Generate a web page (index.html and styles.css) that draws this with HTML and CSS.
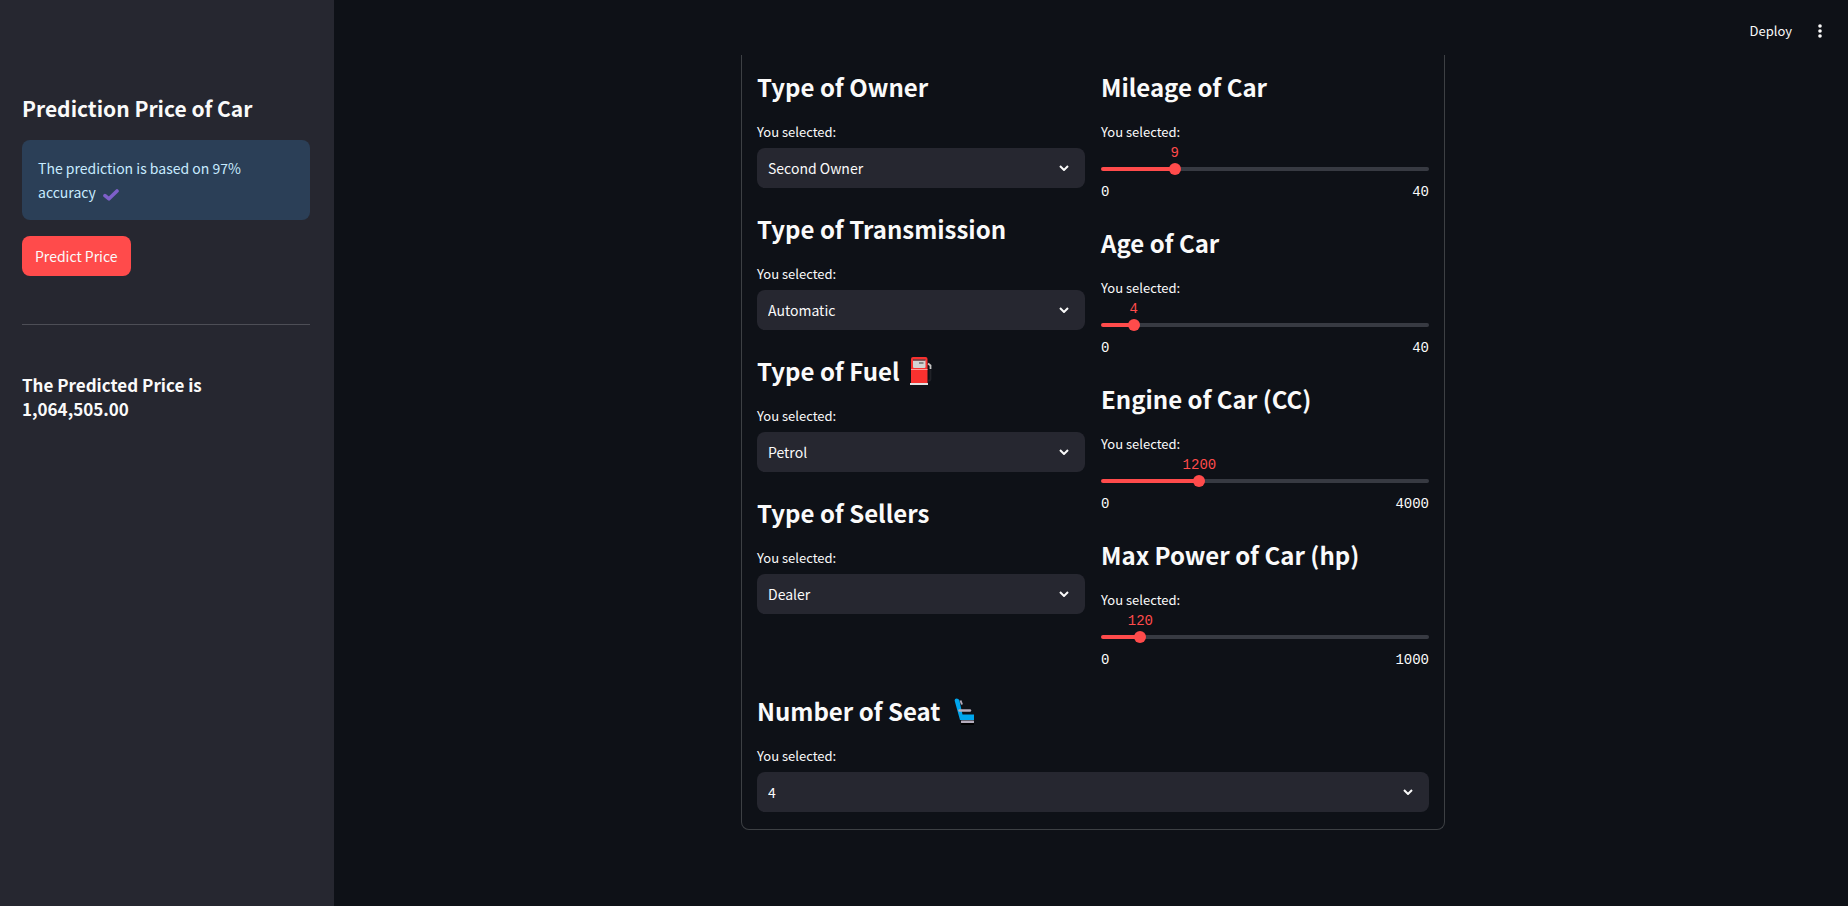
FILE: index.html
```html
<!DOCTYPE html>
<html lang="en">
<head>
<meta charset="utf-8">
<title>Prediction Price of Car</title>
<link rel="stylesheet" href="styles.css">
</head>
<body>
<div class="app">
  <aside class="sidebar">
    <h2 class="sidebar-title">Prediction Price of Car</h2>
    <div class="alert">The prediction is based on 97% accuracy
      <svg class="check" viewBox="0 0 16 12" aria-hidden="true"><path d="M2 6.6l4 3.2L14 2" fill="none" stroke="#7e5fc9" stroke-width="3.6" stroke-linecap="round" stroke-linejoin="round"/></svg>
    </div>
    <button class="predict" type="button">Predict Price</button>
    <hr class="divider">
    <h3 class="result">The Predicted Price is 1,064,505.00</h3>
  </aside>
  <div class="page">
    <header class="topbar">
      <button class="deploy" type="button">Deploy</button>
      <button class="menu" type="button" aria-label="Main menu">
        <svg class="dots" viewBox="0 0 4 14" aria-hidden="true"><g fill="#fafafa"><circle cx="2" cy="2" r="1.8"/><circle cx="2" cy="7" r="1.8"/><circle cx="2" cy="12" r="1.8"/></g></svg>
      </button>
    </header>
    <main class="content">
      <form class="card">
        <div class="columns">
          <div class="column">
            <section class="field">
              <h2 class="heading">Type of Owner</h2>
              <label class="label" for="owner">You selected:</label>
              <div class="select-box"><select class="select" id="owner"><option>Second Owner</option></select><svg class="chevron" viewBox="0 0 10 6" aria-hidden="true"><path d="M1 1l4 4 4-4"/></svg></div>
            </section>
            <section class="field">
              <h2 class="heading">Type of Transmission</h2>
              <label class="label" for="transmission">You selected:</label>
              <div class="select-box"><select class="select" id="transmission"><option>Automatic</option></select><svg class="chevron" viewBox="0 0 10 6" aria-hidden="true"><path d="M1 1l4 4 4-4"/></svg></div>
            </section>
            <section class="field">
              <h2 class="heading">Type of Fuel
                <svg class="emoji" viewBox="0 0 24 28" aria-hidden="true">
                  <path d="M18 6.500l2.500 2v3.500" fill="none" stroke="#c4c4c4" stroke-width="1.800"/>
                  <path d="M20.500 12.500v9.500q0 2-2.500 1.500" fill="none" stroke="#202228" stroke-width="1.800"/>
                  <path d="M1 26V2q0-2 2-2h12.500q2 0 2 2v24z" fill="#f8312f"/>
                  <rect x="3" y="2.500" width="12.500" height="8.500" rx="1" fill="#d3d3d3"/>
                  <path d="M3 3h12.500" stroke="#5c2226" stroke-width="1.400"/>
                  <path d="M9 6h4.500" stroke="#555" stroke-width="1.200"/>
                  <path d="M1 12.500h16.500" stroke="#ff9a9a" stroke-width="1"/>
                  <rect x="0" y="26" width="18" height="2" fill="#e1e1e1"/>
                </svg>
              </h2>
              <label class="label" for="fuel">You selected:</label>
              <div class="select-box"><select class="select" id="fuel"><option>Petrol</option></select><svg class="chevron" viewBox="0 0 10 6" aria-hidden="true"><path d="M1 1l4 4 4-4"/></svg></div>
            </section>
            <section class="field">
              <h2 class="heading">Type of Sellers</h2>
              <label class="label" for="seller">You selected:</label>
              <div class="select-box"><select class="select" id="seller"><option>Dealer</option></select><svg class="chevron" viewBox="0 0 10 6" aria-hidden="true"><path d="M1 1l4 4 4-4"/></svg></div>
            </section>
          </div>
          <div class="column">
            <section class="field">
              <h2 class="heading">Mileage of Car</h2>
              <label class="label" for="mileage">You selected:</label>
              <div class="slider" style="--value: 22.5%"><output class="value" for="mileage">9</output><input class="range" id="mileage" type="range" min="0" max="40" value="9"></div>
              <div class="ticks"><span>0</span><span>40</span></div>
            </section>
            <section class="field">
              <h2 class="heading">Age of Car</h2>
              <label class="label" for="age">You selected:</label>
              <div class="slider" style="--value: 10%"><output class="value" for="age">4</output><input class="range" id="age" type="range" min="0" max="40" value="4"></div>
              <div class="ticks"><span>0</span><span>40</span></div>
            </section>
            <section class="field">
              <h2 class="heading">Engine of Car (CC)</h2>
              <label class="label" for="engine">You selected:</label>
              <div class="slider" style="--value: 30%"><output class="value" for="engine">1200</output><input class="range" id="engine" type="range" min="0" max="4000" value="1200"></div>
              <div class="ticks"><span>0</span><span>4000</span></div>
            </section>
            <section class="field">
              <h2 class="heading">Max Power of Car (hp)</h2>
              <label class="label" for="power">You selected:</label>
              <div class="slider" style="--value: 12%"><output class="value" for="power">120</output><input class="range" id="power" type="range" min="0" max="1000" value="120"></div>
              <div class="ticks"><span>0</span><span>1000</span></div>
            </section>
          </div>
        </div>
        <section class="field">
          <h2 class="heading heading-wide">Number of Seat
            <svg class="emoji" viewBox="0 0 24 28" aria-hidden="true">
              <path d="M6.500 3.500l1.500 4" stroke="#b4acbc" stroke-width="2"/>
              <path d="M.6 3.500q0-2 2-2t2.800 2L8.500 17.500H20V23H6z" fill="#00a6ed"/>
              <path d="M5.500 13.500h10.500" stroke="#b4acbc" stroke-width="2.400" stroke-linecap="round"/>
              <rect x="7" y="23.500" width="13" height="2.500" rx=".5" fill="#b4acbc"/>
              <rect x="7" y="26" width="13" height="2" fill="#000"/>
            </svg>
          </h2>
          <label class="label" for="seats">You selected:</label>
          <div class="select-box"><select class="select" id="seats"><option>4</option></select><svg class="chevron" viewBox="0 0 10 6" aria-hidden="true"><path d="M1 1l4 4 4-4"/></svg></div>
        </section>
      </form>
    </main>
  </div>
</div>
</body>
</html>
```
FILE: styles.css
```css
* { box-sizing: border-box; }

body {
  margin: 0;
  background: #0e1117;
  color: #fafafa;
  font-family: "Noto Sans CJK JP", "Noto Sans", sans-serif;
  font-size: 14px;
  line-height: 24px;
}

h2, h3 { margin: 0; font-weight: 700; }

button, select { font: inherit; color: inherit; border: 0; }

.app { display: flex; min-height: 100vh; }

.sidebar {
  flex: none;
  width: 334px;
  padding: 92px 24px 24px 22px;
  background: #262730;
}

.sidebar-title { font-size: 21px; line-height: 32px; }

.alert {
  margin: 16px 0;
  padding: 16px;
  border-radius: 8px;
  background: #2b3f57;
  color: #c7ebff;
}

.check { width: 16px; height: 12px; margin-left: 4px; vertical-align: -3px; }

.predict {
  height: 40px;
  padding: 0 13px;
  border-radius: 8px;
  background: #ff4b4b;
}

.divider {
  margin: 48px 0;
  border: 0;
  border-top: 1px solid #4d4e56;
}

.result { font-size: 17px; }

.page { flex: 1; min-width: 0; }

.topbar {
  display: flex;
  justify-content: flex-end;
  align-items: center;
  gap: 20px;
  height: 55px;
  padding: 6px 20px 0;
}

.deploy, .menu { padding: 0; background: none; }
.deploy { font-size: 13px; }
.menu { display: flex; justify-content: center; width: 16px; }
.dots { width: 4px; height: 14px; }

.content { display: flex; justify-content: center; padding: 0 16px 72px 20px; }

.card {
  width: 100%;
  max-width: 704px;
  padding: 7px 15px 17px;
  border: 1px solid #3d4044;
  border-top: 0;
  border-radius: 0 0 8px 8px;
}

.columns {
  display: grid;
  grid-template-columns: 1fr 1fr;
  gap: 16px;
  margin-bottom: 16px;
}

.column { display: flex; flex-direction: column; gap: 16px; }

.heading {
  display: flex;
  align-items: center;
  gap: 10px;
  padding: 9px 0 17px;
  font-size: 24px;
  line-height: 32px;
}

.heading-wide { gap: 14px; }

.emoji { width: 24px; height: 28px; }

.label { display: block; font-size: 13px; }

.select-box { position: relative; margin-top: 4px; }

.select {
  display: block;
  width: 100%;
  height: 40px;
  padding: 0 32px 0 11px;
  border-radius: 8px;
  background: #262730;
  appearance: none;
}

.chevron {
  position: absolute;
  top: 17px;
  right: 16px;
  width: 10px;
  height: 6px;
  fill: none;
  stroke: #fafafa;
  stroke-width: 2;
  pointer-events: none;
}

.slider { position: relative; height: 38px; padding-top: 19px; }

.slider::before {
  content: "";
  position: absolute;
  top: 23px;
  left: 0;
  right: 0;
  height: 4px;
  border-radius: 2px;
  background: linear-gradient(to right, #ff4b4b var(--value), #373a42 var(--value));
}

.value {
  position: absolute;
  top: 0;
  left: var(--value);
  transform: translateX(-50%);
  color: #ff4b4b;
  font-family: "Liberation Mono", monospace;
  line-height: 18px;
}

.range {
  position: relative;
  display: block;
  width: calc(100% + 12px);
  height: 12px;
  margin: 0 -6px;
  background: none;
  appearance: none;
}

.range::-webkit-slider-thumb {
  width: 12px;
  height: 12px;
  border-radius: 50%;
  background: #ff4b4b;
  appearance: none;
}

.ticks {
  display: flex;
  justify-content: space-between;
  font-family: "Liberation Mono", monospace;
  line-height: 20px;
}
```
